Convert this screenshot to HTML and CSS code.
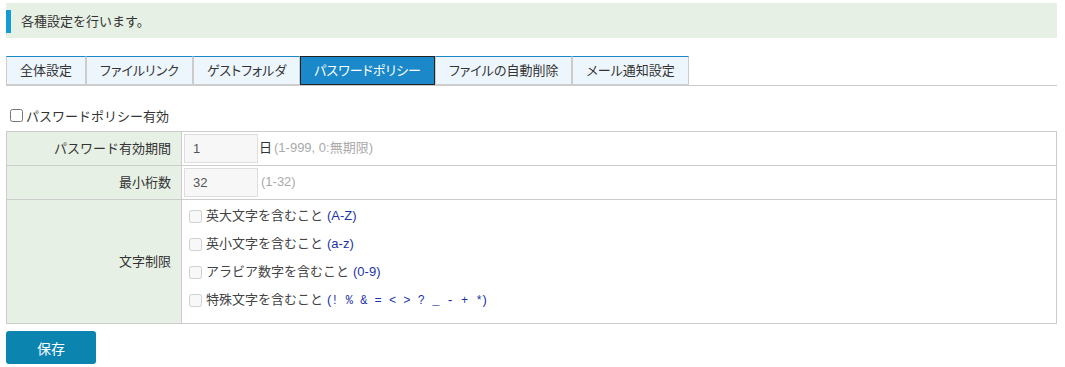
FILE: index.html
```
<!DOCTYPE html>
<html>
<head>
	<title>パスワードポリシー</title>
	<meta charset="utf-8">
	<link rel="stylesheet" href="styles.css">
</head>
<body>
<div class="page">
	<div class="notice"><p>各種設定を行います。</p></div>

	<ul class="tabs">
		<li>全体設定</li>
		<li>ファイルリンク</li>
		<li>ゲストフォルダ</li>
		<li class="active">パスワードポリシー</li>
		<li>ファイルの自動削除</li>
		<li>メール通知設定</li>
	</ul>

	<label class="enable"><input type="checkbox">パスワードポリシー有効</label>

	<table class="policy">
		<tr>
			<th>パスワード有効期間</th>
			<td><input class="num" type="text" value="1" readonly>日<span class="hint">(1-999, 0:無期限)</span></td>
		</tr>
		<tr>
			<th>最小桁数</th>
			<td><input class="num" type="text" value="32" readonly><span class="hint">(1-32)</span></td>
		</tr>
		<tr>
			<th>文字制限</th>
			<td class="rules">
				<label><input type="checkbox" disabled>英大文字を含むこと <span class="chars">(A-Z)</span></label>
				<label><input type="checkbox" disabled>英小文字を含むこと <span class="chars">(a-z)</span></label>
				<label><input type="checkbox" disabled>アラビア数字を含むこと <span class="chars">(0-9)</span></label>
				<label><input type="checkbox" disabled>特殊文字を含むこと <span class="chars">(<code>! % &amp; = &lt; &gt; ? _ - + *</code>)</span></label>
			</td>
		</tr>
	</table>

	<button class="save" type="button">保存</button>
</div>
</body>
</html>
```

FILE: styles.css
```
body {
	margin: 0;
	font-family: "Liberation Sans", "Noto Sans CJK JP", sans-serif;
	font-size: 13px;
	color: #333;
	background: #fff;
}
.page {
	padding: 3px 8px 0 6px;
}

/* お知らせ */
.notice {
	background-color: #e7f0e5;
	padding: 7px 0 5px;
}
.notice p {
	margin: 0;
	border-left: 5px solid #149bd5;
	padding-left: 10px;
	line-height: 23px;
}

/* タブ */
.tabs {
	display: flex;
	list-style: none;
	margin: 18px 0 0;
	padding: 0;
	border-bottom: 1px solid #ccc;
}
.tabs li {
	display: flex;
	align-items: center;
	box-sizing: border-box;
	height: 29px;
	padding: 0 13px;
	border: 1px solid #ccc;
	border-top-color: #1a88c9;
	background-color: #eef6fd;
	line-height: 1;
	font-feature-settings: "palt";
	cursor: pointer;
}
.tabs li.active {
	background-color: #1a88c9;
	border-color: #222;
	color: #fff;
}

.enable {
	display: flex;
	align-items: center;
	height: 20px;
	margin: 19px 0 6px;
}
.enable input {
	margin: 0 3px 0 4px;
}

/* 設定テーブル */
.policy {
	width: 100%;
	border-collapse: collapse;
}
.policy th,
.policy td {
	border: 1px solid #ccc;
	padding: 2px;
	line-height: 20px;
}
.policy th {
	width: 164px;
	padding: 0 10px 0 0;
	background-color: #e7f0e5;
	font-weight: normal;
	text-align: right;
	vertical-align: middle;
}
.num {
	box-sizing: border-box;
	width: 74px;
	height: 29px;
	margin: 0 1px 0 0;
	padding: 0 8px;
	border: 1px solid #ddd;
	background-color: #f7f7f7;
	font-family: inherit;
	font-size: 13px;
	color: #555;
	vertical-align: middle;
	outline: none;
}
.hint {
	margin-left: 2px;
	color: #aaa;
}
.policy .rules {
	padding: 2px 2px 9px;
}
.rules label {
	display: flex;
	align-items: center;
	height: 28px;
	color: #444;
}
.rules input {
	margin: 0 4px 0 5px;
}
.chars {
	margin-left: 4px;
	color: #2233a8;
}
.chars code {
	font-family: "Liberation Mono", monospace;
	font-size: 12px;
}

.save {
	display: block;
	width: 90px;
	height: 33px;
	margin-top: 7px;
	border: none;
	border-radius: 3px;
	background-color: #0b84b0;
	color: #fff;
	font-family: inherit;
	font-size: 14px;
	cursor: pointer;
}
```
